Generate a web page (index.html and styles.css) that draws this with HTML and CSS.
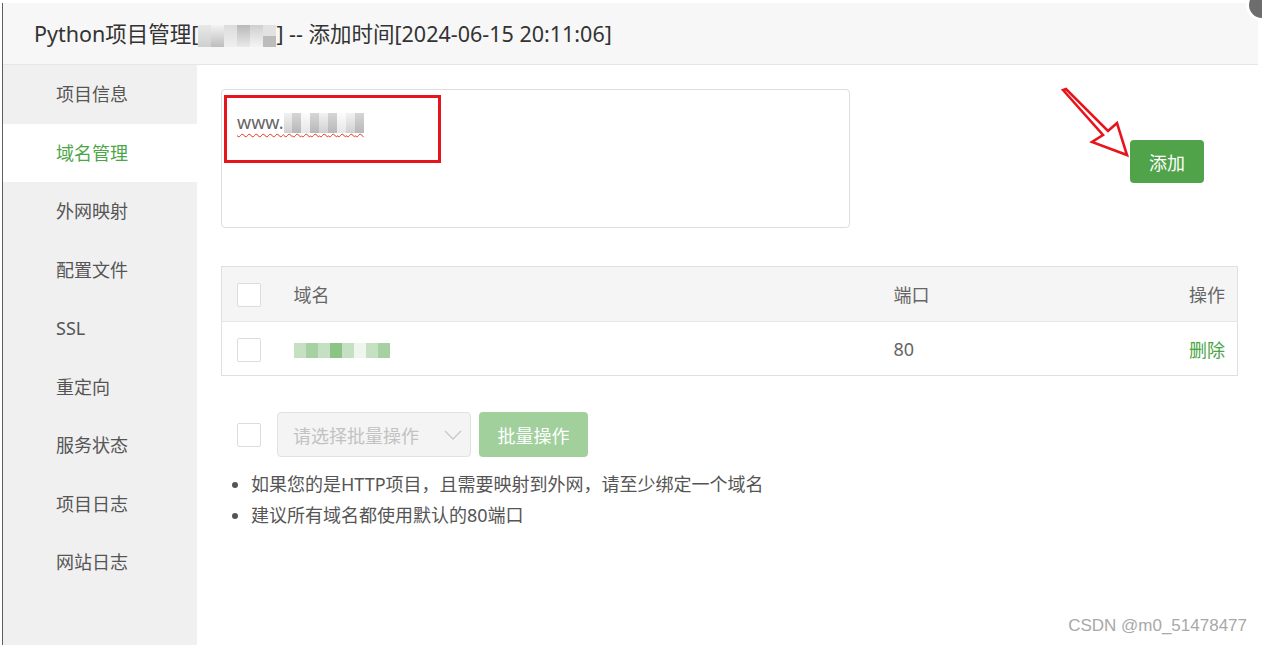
FILE: index.html
```html
<!DOCTYPE html>
<html lang="zh-CN">
<head>
  <meta charset="UTF-8" />
  <title>Python项目管理</title>
  <link rel="stylesheet" href="styles.css">
</head>
<body>

  <div class="layer">
    <!-- close button, only a corner shows -->
    <span class="layer-close"></span>

    <div class="layer-title">
      Python项目管理[<span class="mosaic mosaic-title"><i></i><i></i><i></i><i></i><i></i><i></i></span>] -- 添加时间[2024-06-15 20:11:06]
    </div>

    <div class="layer-body">
      <ul class="side-menu">
        <li>项目信息</li>
        <li class="active">域名管理</li>
        <li>外网映射</li>
        <li>配置文件</li>
        <li>SSL</li>
        <li>重定向</li>
        <li>服务状态</li>
        <li>项目日志</li>
        <li>网站日志</li>
      </ul>

      <div class="content">
        <div class="add-row">
          <div class="domain-input">
            <span class="typed">www.<span class="px a">&nbsp;</span><span class="px b">&nbsp;</span><span class="px c">&nbsp;</span><span class="px b">&nbsp;</span><span class="px a">&nbsp;</span><span class="px b">&nbsp;</span><span class="px c">&nbsp;</span><span class="px a">&nbsp;</span><span class="px b">&nbsp;</span></span>
            <span class="mark-box"></span>
          </div>
          <button class="btn-add">添加</button>

          <svg class="arrow" width="80" height="80" viewBox="0 0 80 80">
            <polygon points="3,3 43,48 32,55 67,68 57,36 48,44 6,2" fill="#fff" stroke="#e8141c" stroke-width="2.6" stroke-linejoin="miter"/>
          </svg>
        </div>

        <table class="domain-table">
          <colgroup>
            <col class="w-check">
            <col class="w-name">
            <col class="w-port">
            <col>
          </colgroup>
          <thead>
            <tr>
              <th class="col-check"><span class="checkbox"></span></th>
              <th>域名</th>
              <th>端口</th>
              <th class="col-op">操作</th>
            </tr>
          </thead>
          <tbody>
            <tr>
              <td class="col-check"><span class="checkbox"></span></td>
              <td><span class="mosaic mosaic-green"><i></i><i></i><i></i><i></i><i></i><i></i><i></i><i></i></span></td>
              <td>80</td>
              <td class="col-op"><a class="link-del">删除</a></td>
            </tr>
          </tbody>
        </table>

        <div class="batch-row">
          <span class="checkbox"></span>
          <div class="batch-select">
            <span>请选择批量操作</span>
            <svg width="18" height="10" viewBox="0 0 18 10"><path d="M1 1 L9 9 L17 1" fill="none" stroke="#c8c8c8" stroke-width="1.3"/></svg>
          </div>
          <button class="btn-batch">批量操作</button>
        </div>

        <ul class="tips">
          <li>如果您的是HTTP项目，且需要映射到外网，请至少绑定一个域名</li>
          <li>建议所有域名都使用默认的80端口</li>
        </ul>
      </div>
    </div>
  </div>

  <div class="watermark">CSDN @m0_51478477</div>

</body>
</html>
```

FILE: styles.css
```css
body {
  margin: 0;
  background: #fff;
  font-family: "Noto Sans", "Noto Sans CJK SC", sans-serif;
  color: #666;
  overflow: hidden;
}

.layer {
  position: relative;
  margin: 3px 0 0 2px;
  width: 1255px;
  height: 642px;
  border-left: 1px solid #5f5f5f;
  display: flex;
  flex-direction: column;
}

.layer-close {
  position: absolute;
  top: -14px;
  right: -20px;
  width: 26px;
  height: 26px;
  border-radius: 50%;
  background: #6d6d6d;
  border: 3px solid #fff;
}

.layer-title {
  height: 62px;
  line-height: 61px;
  padding-left: 31px;
  background: #f7f7f7;
  border-bottom: 1px solid #e6e6e6;
  box-sizing: border-box;
  font-size: 21.5px;
  color: #333;
  white-space: nowrap;
}

.layer-body {
  flex: 1;
  display: flex;
}

.side-menu {
  list-style: none;
  margin: 0;
  padding: 0;
  width: 194px;
  background: #f0f0f0;
}

.side-menu li {
  height: 58.5px;
  line-height: 58px;
  padding-left: 53px;
  font-size: 18px;
  color: #555;
}

.side-menu li.active {
  background: #fff;
  color: #4ca647;
}

.content {
  flex: 1;
  padding: 24px 20px 0 24px;
}

/* add domain */
.add-row {
  position: relative;
  display: flex;
  align-items: flex-start;
}

.domain-input {
  position: relative;
  width: 629px;
  height: 139px;
  box-sizing: border-box;
  border: 1px solid #ddd;
  border-radius: 4px;
  padding: 17px 15px;
  font-size: 18px;
  line-height: 30px;
  color: #666;
}

.typed {
  text-decoration: underline wavy #e5331b;
  text-decoration-thickness: 1px;
  text-underline-offset: 4px;
}

.px {
  font-size: 15px;
  letter-spacing: 5px;
}

.px.a { background: linear-gradient(#f2f2f2, #d0d0d0); }
.px.b { background: linear-gradient(#d6d6d6, #b8b8b8); }
.px.c { background: linear-gradient(#fcfcfc, #e6e6e6); }

.mark-box {
  position: absolute;
  left: 2px;
  top: 5px;
  width: 211px;
  height: 62px;
  border: 3px solid #e8141c;
}

.btn-add {
  margin: 51px 34px 0 auto;
  width: 74px;
  height: 43px;
  border: none;
  border-radius: 4px;
  background: #51a34a;
  color: #fff;
  font-family: inherit;
  font-size: 18px;
}

.arrow {
  position: absolute;
  left: 839px;
  top: -2px;
}

/* mosaic blocks over hidden names */
.mosaic {
  display: inline-flex;
  vertical-align: middle;
}

.mosaic i {
  display: inline-block;
}

.mosaic-title i { height: 22px; width: 13px; }
.mosaic-title i:nth-child(1) { background: linear-gradient(#e8e8e8, #cfcfcf); }
.mosaic-title i:nth-child(2) { background: linear-gradient(#f3f3f3, #bdbdbd); }
.mosaic-title i:nth-child(3) { background: linear-gradient(#dcdcdc, #efefef); }
.mosaic-title i:nth-child(4) { background: linear-gradient(#b9b9b9, #e9e9e9); }
.mosaic-title i:nth-child(5) { background: linear-gradient(#cfcfcf, #f4f4f4); }
.mosaic-title i:nth-child(6) { background: linear-gradient(#e2e2e2 50%, #bcbcbc 50%); }

.mosaic-green i { width: 12px; height: 15px; }
.mosaic-green i:nth-child(odd) { background: #c6e1c2; }
.mosaic-green i:nth-child(even) { background: #a8d1a3; }
.mosaic-green i:nth-child(4) { background: #8cc386; }
.mosaic-green i:nth-child(6) { background: #eef6ed; }

/* table */
.domain-table {
  margin-top: 38px;
  width: 100%;
  table-layout: fixed;
  border-collapse: collapse;
  border: 1px solid #e0e0e0;
  font-size: 18px;
  color: #666;
}

.w-check { width: 72px; }
.w-name { width: 600px; }
.w-port { width: 250px; }

.domain-table th {
  height: 54px;
  padding: 0;
  background: #f5f5f5;
  font-weight: normal;
  text-align: left;
  border-bottom: 1px solid #e6e6e6;
}

.domain-table td {
  height: 53px;
  padding: 0;
}

.col-check {
  padding-left: 15px !important;
}

.col-op {
  text-align: right !important;
  padding-right: 12px !important;
}

.link-del {
  color: #4ba447;
}

.checkbox {
  display: inline-block;
  vertical-align: middle;
  width: 22px;
  height: 22px;
  border: 1px solid #dcdcdc;
  border-radius: 2px;
  background: #fff;
}

/* batch */
.batch-row {
  margin-top: 36px;
  display: flex;
  align-items: center;
  gap: 8px;
  padding-left: 16px;
}

.batch-row .checkbox {
  margin-right: 8px;
}

.batch-select {
  width: 194px;
  height: 45px;
  box-sizing: border-box;
  border: 1px solid #e1e1e1;
  border-radius: 4px;
  background: #f4f4f4;
  display: flex;
  align-items: center;
  justify-content: space-between;
  padding: 0 8px 0 15px;
  font-size: 18px;
  color: #c2c2c2;
}

.btn-batch {
  width: 109px;
  height: 45px;
  border: none;
  border-radius: 4px;
  background: #a2d09d;
  color: #fff;
  font-family: inherit;
  font-size: 18px;
}

.tips {
  margin: 12px 0 0;
  padding-left: 30px;
  font-size: 18px;
  line-height: 31px;
  color: #555;
}

.watermark {
  position: absolute;
  right: 15px;
  bottom: 9px;
  font-family: "Liberation Sans", sans-serif;
  font-size: 17px;
  color: #a8a8a8;
}
```
